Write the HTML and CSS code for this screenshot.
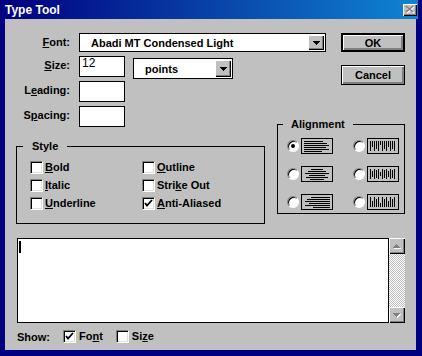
FILE: index.html
```html
<!DOCTYPE html>
<html lang="en">
<head>
    <meta charset="UTF-8">
    <title>Type Tool</title>
    <link rel="stylesheet" href="styles.css">
</head>
<body>
    <div class="window">
        <div class="titlebar">
            <span class="title">Type Tool</span>
            <span class="close">
                <svg width="14" height="12" viewBox="0 0 14 12">
                    <path d="M4 3l7 6M11 3l-7 6" stroke="#fff" stroke-width="1.6"/>
                    <path d="M3 2l7 6M10 2l-7 6" stroke="#808080" stroke-width="1.6"/>
                </svg>
            </span>
        </div>
        <div class="client">
            <div class="top">
                <div class="left">
                    <div class="row">
                        <span class="label"><u>F</u>ont:</span>
                        <div class="combo combo-font">
                            <span class="combo-text">Abadi MT Condensed Light</span>
                            <span class="drop"><svg width="7" height="4"><path d="M0 0h7v1h-1v1h-1v1h-1v1h-1v-1h-1v-1h-1v-1h-1z"/></svg></span>
                        </div>
                    </div>
                    <div class="row row-size">
                        <span class="label"><u>S</u>ize:</span>
                        <div class="field field-size">12</div>
                        <div class="combo combo-units">
                            <span class="combo-text">points</span>
                            <span class="drop"><svg width="7" height="4"><path d="M0 0h7v1h-1v1h-1v1h-1v1h-1v-1h-1v-1h-1v-1h-1z"/></svg></span>
                        </div>
                    </div>
                    <div class="row row-leading">
                        <span class="label">L<u>e</u>ading:</span>
                        <div class="field"></div>
                    </div>
                    <div class="row row-spacing">
                        <span class="label">S<u>p</u>acing:</span>
                        <div class="field"></div>
                    </div>
                    <div class="group group-style">
                        <span class="legend">Style</span>
                        <div class="checks">
                            <div class="check"><span class="box"></span><span><u>B</u>old</span></div>
                            <div class="check"><span class="box"></span><span><u>O</u>utline</span></div>
                            <div class="check"><span class="box"></span><span><u>I</u>talic</span></div>
                            <div class="check"><span class="box"></span><span>Stri<u>k</u>e Out</span></div>
                            <div class="check"><span class="box"></span><span><u>U</u>nderline</span></div>
                            <div class="check"><span class="box checked"><svg width="9" height="9"><path d="M1 4l2 2.5L8 1" fill="none" stroke="#000" stroke-width="1.8"/></svg></span><span><u>A</u>nti-Aliased</span></div>
                        </div>
                    </div>
                </div>
                <div class="right">
                    <div class="btn default">OK</div>
                    <div class="btn btn-cancel">Cancel</div>
                    <div class="group group-align">
                        <span class="legend">Alignment</span>
                        <div class="aligns">
                            <div class="opt">
                                <span class="radio on"></span>
                                <svg class="icon" viewBox="0 0 32 16"><rect x=".5" y=".5" width="31" height="15" fill="none" stroke="#000"/><path d="M3 3.5h19M3 5.5h23M3 7.5h25M3 9.5h22M3 11.5h25M3 13.5h18" stroke="#000"/></svg>
                            </div>
                            <div class="opt">
                                <span class="radio"></span>
                                <svg class="icon" viewBox="0 0 32 16"><rect x=".5" y=".5" width="31" height="15" fill="none" stroke="#000"/><path d="M3.5 3v10M5.5 3v6M7.5 3v10M9.5 3v8M11.5 3v10M13.5 3v4M15.5 3v10M17.5 3v8M19.5 3v10M21.5 3v6M23.5 3v10M25.5 3v8M27.5 3v10" stroke="#000"/></svg>
                            </div>
                            <div class="opt">
                                <span class="radio"></span>
                                <svg class="icon" viewBox="0 0 32 16"><rect x=".5" y=".5" width="31" height="15" fill="none" stroke="#000"/><path d="M10 3.5h12M7 5.5h18M4 7.5h24M8 9.5h16M5 11.5h22M9 13.5h14" stroke="#000"/></svg>
                            </div>
                            <div class="opt">
                                <span class="radio"></span>
                                <svg class="icon" viewBox="0 0 32 16"><rect x=".5" y=".5" width="31" height="15" fill="none" stroke="#000"/><path d="M3.5 3v10M5.5 5v6M7.5 3v10M9.5 4v8M11.5 3v10M13.5 6v4M15.5 3v10M17.5 4v8M19.5 3v10M21.5 5v6M23.5 3v10M25.5 4v8M27.5 3v10" stroke="#000"/></svg>
                            </div>
                            <div class="opt">
                                <span class="radio"></span>
                                <svg class="icon" viewBox="0 0 32 16"><rect x=".5" y=".5" width="31" height="15" fill="none" stroke="#000"/><path d="M10 3.5h19M6 5.5h23M4 7.5h25M8 9.5h21M4 11.5h25M12 13.5h17" stroke="#000"/></svg>
                            </div>
                            <div class="opt">
                                <span class="radio"></span>
                                <svg class="icon" viewBox="0 0 32 16"><rect x=".5" y=".5" width="31" height="15" fill="none" stroke="#000"/><path d="M3.5 3v10M5.5 7v6M7.5 3v10M9.5 5v8M11.5 3v10M13.5 9v4M15.5 3v10M17.5 5v8M19.5 3v10M21.5 7v6M23.5 3v10M25.5 5v8M27.5 3v10" stroke="#000"/></svg>
                            </div>
                        </div>
                    </div>
                </div>
            </div>
            <div class="editor">
                <div class="text"><span class="caret"></span></div>
                <div class="scroll">
                    <span class="sbtn"><svg width="8" height="5"><path d="M1 5h7v-1h-1v-1h-1v-1h-1v-1h-1v1h-1v1h-1v1h-1z" fill="#fff"/><path d="M0 4h7v-1h-1v-1h-1v-1h-1v-1h-1v1h-1v1h-1v1h-1z" fill="#808080"/></svg></span>
                    <span class="track"></span>
                    <span class="sbtn"><svg width="8" height="5"><path d="M1 1h7v1h-1v1h-1v1h-1v1h-1v-1h-1v-1h-1v-1h-1z" fill="#fff"/><path d="M0 0h7v1h-1v1h-1v1h-1v1h-1v-1h-1v-1h-1v-1h-1z" fill="#808080"/></svg></span>
                </div>
            </div>
            <div class="show">
                <span class="show-label">Show:</span>
                <div class="check"><span class="box checked"><svg width="9" height="9"><path d="M1 4l2 2.5L8 1" fill="none" stroke="#000" stroke-width="1.8"/></svg></span><span>Fo<u>n</u>t</span></div>
                <div class="check"><span class="box"></span><span>Si<u>z</u>e</span></div>
            </div>
        </div>
    </div>
</body>
</html>
```
FILE: styles.css
```css
body {
    margin: 0;
    font-family: "Liberation Sans", Arial, sans-serif;
    font-size: 11px;
    font-weight: bold;
    color: #000;
}

.window {
    width: 422px;
    height: 356px;
    box-sizing: border-box;
    background: #000080;
    padding: 0 4px 6px 5px;
    display: flex;
    flex-direction: column;
}

.titlebar {
    height: 19px;
    flex: none;
    background: linear-gradient(to right, #000080, #1084d0);
    display: flex;
    align-items: center;
    justify-content: space-between;
    color: #fff;
    font-size: 12px;
}

.title {
    margin-top: 1px;
}

.close {
    width: 14px;
    height: 12px;
    margin-right: 1px;
    background: #c0c0c0;
    box-shadow: inset 1px 1px #fff, inset -1px -1px #000, inset -2px -2px #808080;
    display: flex;
}

.client {
    flex: 1;
    background: #c0c0c0;
    margin-right: 2px;
    display: flex;
    flex-direction: column;
}

.top {
    display: flex;
    padding-top: 14px;
}

.left {
    width: 272px;
    flex: none;
}

.right {
    width: 128px;
    display: flex;
    flex-direction: column;
    align-items: flex-end;
}

.row {
    display: flex;
    align-items: flex-start;
}

.row-size { margin-top: 4px; }
.row-leading { margin-top: 2px; }
.row-spacing { margin-top: 4px; }

.label {
    width: 65px;
    flex: none;
    margin-right: 9px;
    text-align: right;
    line-height: 19px;
}

.field {
    width: 46px;
    height: 21px;
    flex: none;
    box-sizing: border-box;
    border: 1px solid #000;
    background: #fff;
    padding: 0 2px;
}

.field-size {
    font-size: 12px;
    font-weight: normal;
    line-height: 13px;
}

.combo {
    display: flex;
    flex: none;
    box-sizing: border-box;
    border: 1px solid #000;
    background: #fff;
    padding: 1px;
    height: 19px;
}

.combo-font {
    width: 247px;
}

.combo-units {
    width: 100px;
    height: 21px;
    margin: 2px 0 0 8px;
}

.combo-text {
    flex: 1;
    padding-left: 10px;
    display: flex;
    align-items: center;
}

.drop {
    width: 16px;
    background: #c0c0c0;
    box-shadow: inset 1px 1px #fff, inset -1px -1px #000, inset -2px -2px #808080;
    display: flex;
    align-items: center;
    justify-content: center;
}

.btn {
    width: 64px;
    height: 19px;
    box-sizing: border-box;
    border: 1px solid #000;
    background: #c0c0c0;
    box-shadow: inset 1px 1px #fff, inset -1px -1px #808080, inset -2px -2px #808080;
    display: flex;
    align-items: center;
    justify-content: center;
}

.btn.default {
    border-width: 2px;
}

.btn-cancel {
    height: 20px;
    margin-top: 13px;
}

.group {
    position: relative;
    box-sizing: border-box;
    border: 1px solid #000;
}

.legend {
    position: absolute;
    top: -7px;
    background: #c0c0c0;
    line-height: 12px;
}

.group-style {
    width: 249px;
    height: 78px;
    margin: 19px 0 0 11px;
    padding: 14px 0 0 13px;
}

.group-style .legend {
    left: 6px;
    padding: 0 9px;
}

.group-align {
    width: 128px;
    height: 90px;
    margin-top: 39px;
    padding: 13px 0 0 9px;
}

.group-align .legend {
    left: 5px;
    padding: 0 8px;
}

.checks {
    display: grid;
    grid-template-columns: 112px 112px;
    row-gap: 5px;
}

.check {
    display: flex;
    align-items: center;
    height: 13px;
    line-height: 13px;
}

.box {
    width: 13px;
    height: 13px;
    flex: none;
    box-sizing: border-box;
    background: #fff;
    border: 1px solid;
    border-color: #808080 #fff #fff #808080;
    box-shadow: inset 1px 1px #000, inset -1px -1px #dfdfdf;
    margin-right: 2px;
    display: flex;
    align-items: center;
    justify-content: center;
}

.aligns {
    display: grid;
    grid-template-columns: 46px 46px;
    column-gap: 20px;
    row-gap: 12px;
}

.opt {
    display: flex;
    align-items: center;
}

.radio {
    width: 12px;
    height: 12px;
    flex: none;
    box-sizing: border-box;
    border-radius: 50%;
    background: #fff;
    border: 1px solid;
    border-color: #808080 #fff #fff #808080;
    box-shadow: inset 1px 1px #000;
    margin-right: 2px;
    display: flex;
    align-items: center;
    justify-content: center;
}

.radio.on::after {
    content: "";
    width: 4px;
    height: 4px;
    border-radius: 50%;
    background: #000;
}

.icon {
    width: 32px;
    height: 16px;
    display: block;
}

.editor {
    display: flex;
    height: 85px;
    margin: 14px 0 0 12px;
}

.text {
    width: 372px;
    box-sizing: border-box;
    border: 1px solid #000;
    background: #fff;
}

.caret {
    display: block;
    width: 2px;
    height: 12px;
    margin: 2px 0 0 1px;
    background: #000;
}

.scroll {
    width: 16px;
    display: flex;
    flex-direction: column;
}

.sbtn {
    height: 16px;
    background: #c0c0c0;
    box-shadow: inset 1px 1px #fff, inset -1px -1px #000, inset -2px -2px #808080;
    display: flex;
    align-items: center;
    justify-content: center;
}

.track {
    flex: 1;
    background: repeating-conic-gradient(#c0c0c0 0 25%, #fff 0 50%) 0 0 / 2px 2px;
}

.show {
    display: flex;
    align-items: center;
    height: 13px;
    margin: 7px 0 0 12px;
}

.show-label {
    width: 46px;
}

.show .check + .check {
    margin-left: 13px;
}

.show .box {
    margin-right: 3px;
}
```
